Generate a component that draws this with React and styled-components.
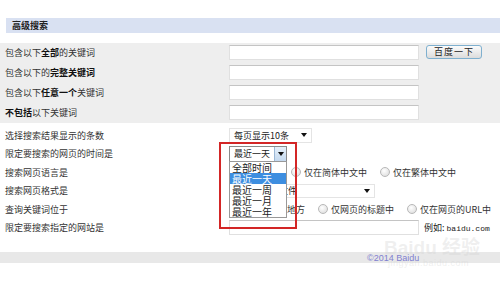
import styled, { createGlobalStyle } from "styled-components";

const GlobalStyle = createGlobalStyle`
  body {
    margin: 0;
    background: #fff;
    font-family: "Noto Sans CJK SC", "Liberation Sans", sans-serif;
    font-size: 9px;
    color: #333;
  }
`;

const Page = styled.div`
  position: relative;
  width: 500px;
  height: 282px;
  overflow: hidden;
  padding-top: 18px;
  box-sizing: border-box;
`;

const Title = styled.div`
  margin-left: 6px;
  height: 15px;
  line-height: 15px;
  padding-left: 6px;
  background: #d9e1f2;
  font-weight: bold;
  color: #222;
`;

const KeywordBox = styled.div`
  margin-top: 10px;
  background: #eeeeee;
`;

const KeywordRow = styled.div`
  display: flex;
  align-items: flex-start;
  height: 20px;
  padding-top: 2px;
  box-sizing: border-box;
`;

const Label = styled.div`
  width: 229px;
  flex-shrink: 0;
  padding-left: 5px;
  box-sizing: border-box;
  line-height: 15px;
  b {
    color: #111;
  }
`;

const TextInput = styled.input`
  width: 190px;
  height: 15px;
  margin: 0;
  padding: 0 2px;
  background: #fff;
  border: 1px solid #e0e0e0;
  border-top-color: #c4c4c4;
  box-sizing: border-box;
  outline: none;
`;

const SearchBtn = styled.button`
  margin-left: 7px;
  width: 56px;
  height: 14px;
  padding: 0;
  font: inherit;
  font-size: 9px;
  line-height: 12px;
  color: #222;
  border: 1px solid #7fb0cf;
  border-radius: 3px;
  background: linear-gradient(#fbfbfb, #dcdcdc);
  letter-spacing: 1px;
`;

const Options = styled.div`
  padding-top: 3px;
`;

const OptionRow = styled.div`
  display: flex;
  align-items: center;
  height: 18.5px;
`;

const Select = styled.div`
  position: relative;
  display: flex;
  align-items: center;
  justify-content: space-between;
  width: ${(p) => p.$w}px;
  height: ${(p) => p.$h || 15}px;
  padding-left: 4px;
  background: #fff;
  border: 1px solid ${(p) => p.$border || "#e4e4e4"};
  box-sizing: border-box;
  color: #222;
  white-space: nowrap;
`;

const Caret = styled.span`
  width: 0;
  height: 0;
  margin-right: 4px;
  border-left: 3px solid transparent;
  border-right: 3px solid transparent;
  border-top: 4px solid #111;
`;

const CaretButton = styled.span`
  display: flex;
  align-items: center;
  justify-content: center;
  width: 11px;
  height: 100%;
  border-left: 1px solid #9cb8d6;
  background: linear-gradient(#e6f0fa, #c4d9ef);
  ${Caret} {
    margin: 0;
  }
`;

const DropList = styled.ul`
  position: absolute;
  left: -1px;
  top: 100%;
  width: 58px;
  margin: 0;
  padding: 0;
  list-style: none;
  background: #fff;
  border: 1px solid #999;
  box-sizing: border-box;
  z-index: 2;
`;

const DropItem = styled.li`
  height: 11px;
  line-height: 11px;
  padding-left: 2px;
  font-size: 10px;
  color: ${(p) => (p.$active ? "#fff" : "#222")};
  background: ${(p) => (p.$active ? "#3d8ee0" : "transparent")};
`;

const Highlight = styled.div`
  position: absolute;
  left: -11px;
  top: -5px;
  width: 78px;
  height: 87px;
  border: 2px solid #d32626;
  box-sizing: border-box;
  z-index: 3;
  pointer-events: none;
`;

const RadioGroup = styled.div`
  display: flex;
  align-items: center;
  gap: 13px;
  white-space: nowrap;
`;

const Radio = styled.label`
  display: flex;
  align-items: center;
  gap: 3px;
  &::before {
    content: "";
    width: 8px;
    height: 8px;
    border-radius: 50%;
    border: 1px solid #b8b8b8;
    background: radial-gradient(circle at 40% 35%, #fff, #d8d8d8);
  }
`;

const Example = styled.span`
  margin-left: 5px;
  color: #222;
  white-space: nowrap;
  tt {
    font-family: "Liberation Mono", monospace;
    font-size: 8px;
  }
`;

const Footer = styled.div`
  margin-top: 15px;
  height: 11px;
  line-height: 13px;
  padding-left: 367px;
  background: #e8e8e8;
  font-family: "Liberation Sans", sans-serif;
  font-size: 9px;
  color: #8080d0;
`;

const Watermark = styled.div`
  position: absolute;
  left: 384px;
  top: 238px;
  font-family: "Liberation Sans", "Noto Sans CJK SC", sans-serif;
  color: rgba(210, 210, 210, 0.35);
  pointer-events: none;
  line-height: 1;
  white-space: nowrap;
  div {
    font-size: 19px;
    font-weight: bold;
  }
  span {
    display: block;
    margin-top: 2px;
    margin-left: 4px;
    font-size: 9px;
    letter-spacing: 0.5px;
  }
`;

const keywordRows = [
  <>包含以下<b>全部</b>的关键词</>,
  <>包含以下的<b>完整关键词</b></>,
  <>包含以下<b>任意一个</b>关键词</>,
  <><b>不包括</b>以下关键词</>,
];

const times = ["全部时间", "最近一天", "最近一周", "最近一月", "最近一年"];

export default function App() {
  return (
    <Page>
      <GlobalStyle />
      <Title>高级搜索</Title>

      <KeywordBox>
        {keywordRows.map((label, i) => (
          <KeywordRow key={i}>
            <Label>{label}</Label>
            <TextInput readOnly />
            {i === 0 && <SearchBtn>百度一下</SearchBtn>}
          </KeywordRow>
        ))}
      </KeywordBox>

      <Options>
        <OptionRow>
          <Label>选择搜索结果显示的条数</Label>
          <Select $w={83}>
            每页显示10条
            <Caret />
          </Select>
        </OptionRow>

        <OptionRow>
          <Label>限定要搜索的网页的时间是</Label>
          <Select $w={58} $h={16} $border="#8a8a8a">
            最近一天
            <CaretButton>
              <Caret />
            </CaretButton>
            <DropList>
              {times.map((t, i) => (
                <DropItem key={t} $active={i === 1}>
                  {t}
                </DropItem>
              ))}
            </DropList>
            <Highlight />
          </Select>
        </OptionRow>

        <OptionRow>
          <Label>搜索网页语言是</Label>
          <RadioGroup>
            <Radio>全部语言</Radio>
            <Radio>仅在简体中文中</Radio>
            <Radio>仅在繁体中文中</Radio>
          </RadioGroup>
        </OptionRow>

        <OptionRow>
          <Label>搜索网页格式是</Label>
          <Select $w={146} $h={14}>
            所有网页和文件
            <Caret />
          </Select>
        </OptionRow>

        <OptionRow>
          <Label>查询关键词位于</Label>
          <RadioGroup>
            <Radio>网页的任何地方</Radio>
            <Radio>仅网页的标题中</Radio>
            <Radio>仅在网页的URL中</Radio>
          </RadioGroup>
        </OptionRow>

        <OptionRow>
          <Label>限定要搜索指定的网站是</Label>
          <TextInput readOnly />
          <Example>
            例如: <tt>baidu.com</tt>
          </Example>
        </OptionRow>
      </Options>

      <Footer>©2014 Baidu</Footer>

      <Watermark>
        <div>Baidu 经验</div>
        <span>jingyan.baidu.com</span>
      </Watermark>
    </Page>
  );
}
